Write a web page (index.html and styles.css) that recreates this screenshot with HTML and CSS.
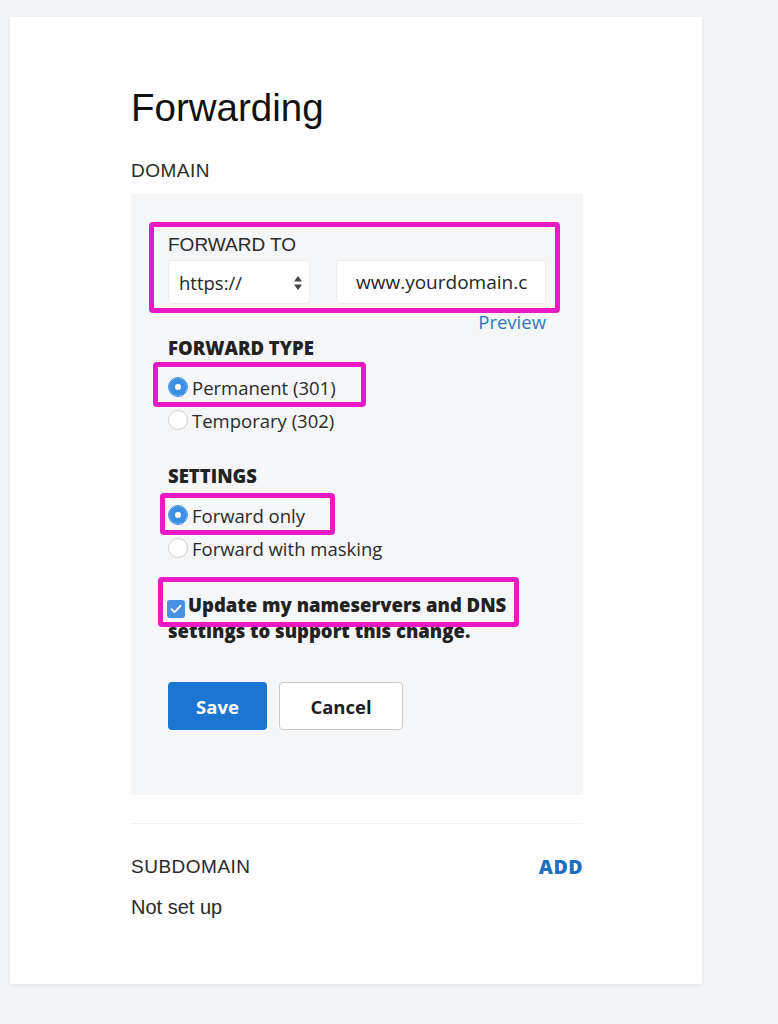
FILE: index.html
```html
<!DOCTYPE html>
<html lang="en">
<head>
    <meta charset="UTF-8">
    <meta name="viewport" content="width=device-width, initial-scale=1.0">
    <title>Forwarding</title>
    <link rel="stylesheet" href="styles.css">
</head>
<body>
    <div class="page">
        <div class="card">
            <h1 class="title">Forwarding</h1>
            <div class="section-label">DOMAIN</div>

            <div class="panel">
                <div class="field">
                    <label class="field-label" for="url">FORWARD TO</label>
                    <div class="url-row">
                        <div class="select-wrap">
                            <select id="protocol">
                                <option>https://</option>
                                <option>http://</option>
                            </select>
                            <svg class="select-arrows" width="10" height="16" viewBox="0 0 10 16">
                                <path d="M5 1 L9 6.5 L1 6.5 Z" fill="#444"/>
                                <path d="M5 15 L9 9.5 L1 9.5 Z" fill="#444"/>
                            </svg>
                        </div>
                        <input type="text" id="url" class="text-input" value="www.yourdomain.c">
                    </div>
                    <span class="mark mark-url"></span>
                </div>
                <div class="preview-row"><a class="link" href="#">Preview</a></div>

                <h3 class="group-title">FORWARD TYPE</h3>
                <label class="option option-first">
                    <input type="radio" class="radio" name="type" checked>
                    Permanent (301)
                    <span class="mark mark-type"></span>
                </label>
                <label class="option">
                    <input type="radio" class="radio" name="type">
                    Temporary (302)
                </label>

                <h3 class="group-title settings-title">SETTINGS</h3>
                <label class="option option-first">
                    <input type="radio" class="radio" name="settings" checked>
                    Forward only
                    <span class="mark mark-settings"></span>
                </label>
                <label class="option">
                    <input type="radio" class="radio" name="settings">
                    Forward with masking
                </label>

                <p class="dns-note">
                    <span class="checkbox">
                        <svg width="12" height="10" viewBox="0 0 12 10">
                            <path d="M1.5 5.2 L4.6 8.2 L10.5 1.8" fill="none" stroke="#fff" stroke-width="1.8" stroke-linecap="round" stroke-linejoin="round"/>
                        </svg>
                    </span>Update my nameservers and DNS settings to support this change.
                    <span class="mark mark-dns"></span>
                </p>

                <div class="button-container">
                    <button type="button" class="btn btn-primary">Save</button>
                    <button type="button" class="btn btn-secondary">Cancel</button>
                </div>
            </div>

            <div class="divider"></div>

            <div class="sub-row">
                <span class="section-label-inline">SUBDOMAIN</span>
                <a class="add-link" href="#">ADD</a>
            </div>
            <div class="status">Not set up</div>
        </div>
    </div>
</body>
</html>
```

FILE: styles.css
```css
body {
    margin: 0;
    background-color: #f3f4f6;
    font-family: 'Open Sans', 'Liberation Sans', Arial, sans-serif;
    color: #262626;
}

.page {
    padding: 17px 0 40px 10px;
}

.card {
    width: 692px;
    min-height: 967px;
    box-sizing: border-box;
    background-color: #fff;
    box-shadow: 0 1px 4px rgba(0, 0, 0, 0.09);
    padding: 68px 119px 0 121px;
}

.title {
    font-family: 'Liberation Sans', Arial, sans-serif;
    font-weight: 400;
    font-size: 38.5px;
    line-height: 46px;
    color: #111;
    margin: 0;
}

.section-label,
.section-label-inline {
    font-family: 'Liberation Sans', Arial, sans-serif;
    font-size: 19px;
    line-height: 22px;
    letter-spacing: 0.5px;
    color: #2a2a2a;
}

.section-label {
    margin-top: 29px;
}

.panel {
    margin-top: 12px;
    height: 601px;
    box-sizing: border-box;
    background-color: #f5f6f8;
    padding: 40px 37px 0;
}

/* magenta annotation boxes drawn over the form */
.field,
.option-first,
.dns-note {
    position: relative;
}

.mark {
    position: absolute;
    box-sizing: border-box;
    border: 5px solid #ea1ac3;
    border-radius: 4px;
    pointer-events: none;
}

.mark-url {
    top: -12px;
    left: -19px;
    right: -14px;
    bottom: -9px;
}

.mark-type {
    top: -10px;
    left: -15px;
    width: 213px;
    height: 45px;
}

.mark-settings {
    top: -7px;
    left: -8px;
    width: 175px;
    height: 42px;
}

.mark-dns {
    top: -15px;
    left: -10px;
    width: 361px;
    height: 50px;
}

.field-label {
    display: block;
    font-family: 'Liberation Sans', Arial, sans-serif;
    font-size: 19px;
    line-height: 22px;
    color: #2a2a2a;
}

.url-row {
    display: flex;
    gap: 26px;
    margin-top: 4px;
}

.select-wrap {
    position: relative;
    width: 142px;
}

select {
    appearance: none;
    -webkit-appearance: none;
    width: 100%;
    height: 44px;
    border: 1px solid #ececec;
    border-radius: 4px;
    background-color: #fff;
    font-family: 'Open Sans', Arial, sans-serif;
    font-size: 18.5px;
    color: #262626;
    padding: 0 10px;
    outline: none;
}

.select-arrows {
    position: absolute;
    right: 7px;
    top: 15px;
    pointer-events: none;
}

.text-input {
    width: 210px;
    height: 44px;
    box-sizing: border-box;
    border: 1px solid #ececec;
    border-radius: 4px;
    background-color: #fff;
    padding: 0 8px 0 19px;
    font-family: 'Open Sans', Arial, sans-serif;
    font-size: 19px;
    color: #262626;
    outline: none;
}

.preview-row {
    margin-top: 7px;
    text-align: right;
    font-size: 18.5px;
    line-height: 22px;
}

.link {
    color: #2c7bc2;
    text-decoration: none;
}

.group-title {
    font-size: 18.5px;
    font-weight: 800;
    line-height: 22px;
    color: #222;
    margin: 4px 0 13px;
}

.settings-title {
    margin-top: 30px;
}

.option {
    display: flex;
    align-items: center;
    gap: 4px;
    height: 30px;
    font-size: 18.5px;
    color: #2a2a2a;
    margin-bottom: 3px;
    cursor: pointer;
}

.radio {
    appearance: none;
    -webkit-appearance: none;
    width: 20px;
    height: 20px;
    margin: 0;
    border-radius: 50%;
    border: 1px solid #cfcfcf;
    background-color: #fff;
    box-sizing: border-box;
}

.radio:checked {
    border-color: #3d8fe3;
    box-shadow: inset 0 0 0 6px #3d8fe3;
}

.dns-note {
    margin: 29px 0 0;
    font-size: 18.5px;
    font-weight: 800;
    line-height: 25px;
    color: #222;
    padding-right: 20px;
}

.checkbox {
    display: inline-flex;
    align-items: center;
    justify-content: center;
    width: 18px;
    height: 18px;
    margin: 0 3px 0 -1px;
    border-radius: 3px;
    background-color: #4a90e2;
    vertical-align: -2px;
}

.button-container {
    display: flex;
    gap: 12px;
    margin-top: 39px;
}

.btn {
    height: 48px;
    border-radius: 4px;
    font-family: 'Open Sans', Arial, sans-serif;
    font-size: 18.5px;
    font-weight: 700;
    cursor: pointer;
}

.btn-primary {
    width: 99px;
    background-color: #1b76d1;
    color: #fff;
    border: none;
}

.btn-secondary {
    width: 124px;
    background-color: #fff;
    color: #1d1d1d;
    border: 1px solid #c9c9c9;
}

.divider {
    margin-top: 28px;
    height: 1px;
    background-color: #f1f1f1;
}

.sub-row {
    display: flex;
    justify-content: space-between;
    align-items: center;
    margin-top: 32px;
}

.add-link {
    font-size: 19.5px;
    font-weight: 800;
    line-height: 22px;
    letter-spacing: 0.5px;
    color: #1f6fbf;
    text-decoration: none;
}

.status {
    margin-top: 18px;
    font-family: 'Liberation Sans', Arial, sans-serif;
    font-size: 20px;
    line-height: 22px;
    color: #2a2a2a;
}
```
